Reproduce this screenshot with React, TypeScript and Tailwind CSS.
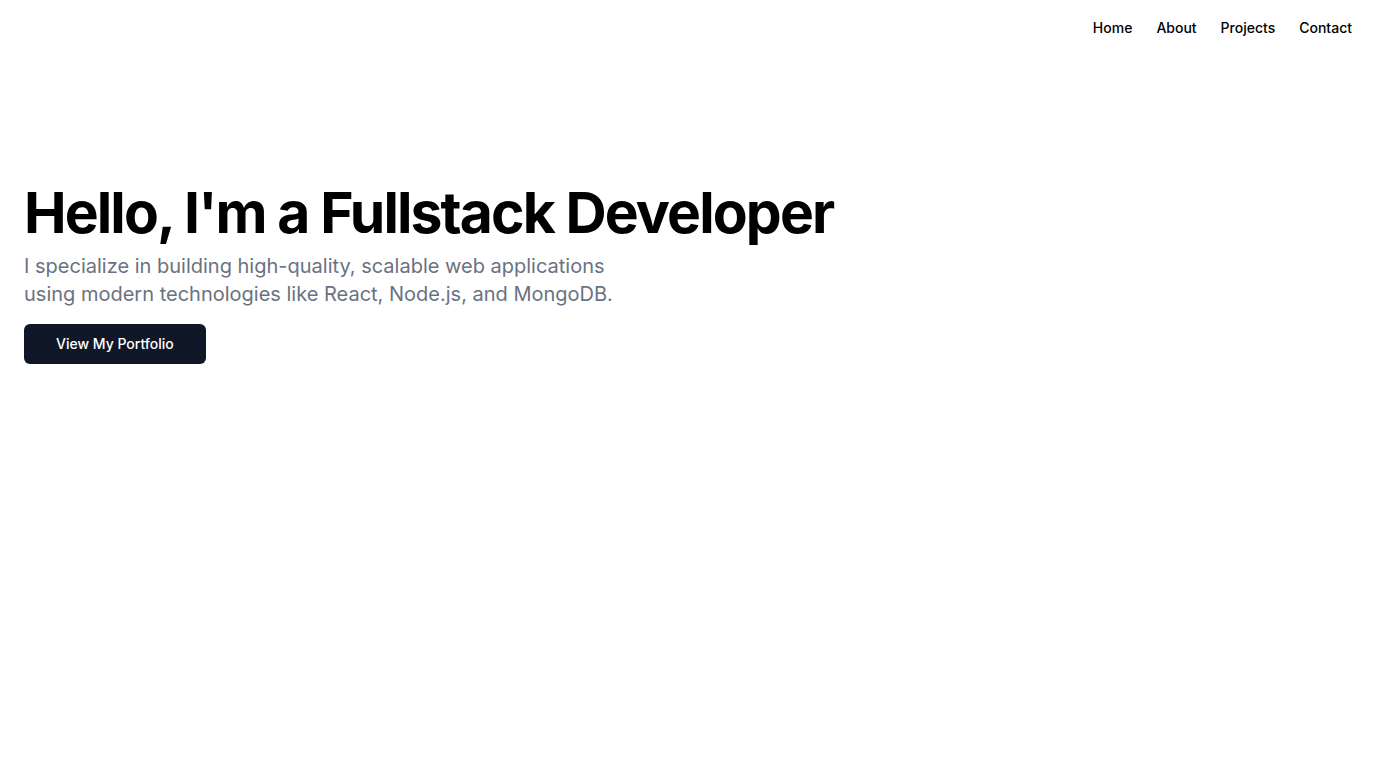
export default function App() {
  return (
    <div className="min-h-screen bg-white text-black" style={{ fontFamily: 'Inter, "Noto Sans", sans-serif' }}>
      <header className="h-14 px-6 flex items-center justify-end">
        <nav className="flex gap-6 text-sm font-medium">
          <a href="#">Home</a>
          <a href="#">About</a>
          <a href="#">Projects</a>
          <a href="#">Contact</a>
        </nav>
      </header>
      <main className="px-6 pt-[127px]">
        <h1 className="text-[57px] leading-[60px] font-bold tracking-[-0.033em]">Hello, I'm a Fullstack Developer</h1>
        <p className="mt-[9px] max-w-[600px] text-xl text-gray-500">
          I specialize in building high-quality, scalable web applications using modern technologies like React, Node.js, and MongoDB.
        </p>
        <button className="mt-4 h-10 px-8 rounded-md bg-gray-900 text-white text-sm font-medium">View My Portfolio</button>
      </main>
    </div>
  )
}
